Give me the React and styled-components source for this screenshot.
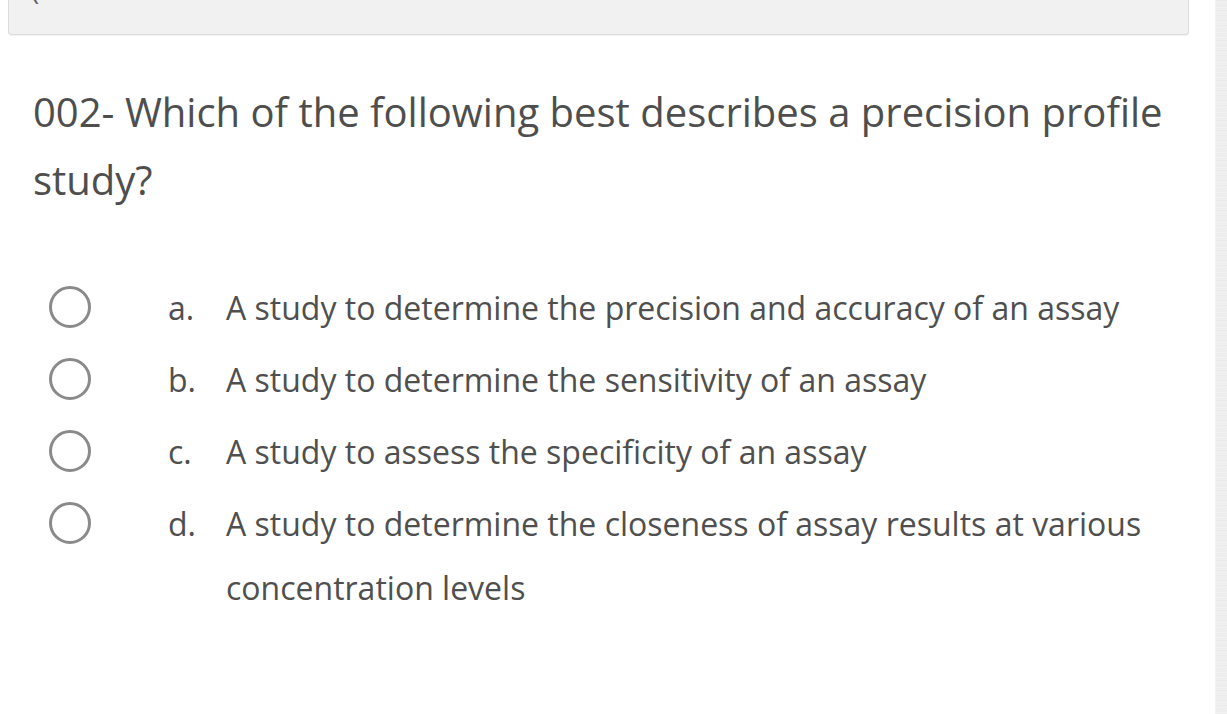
import React from 'react'
import styled, { createGlobalStyle } from 'styled-components'

const GlobalStyle = createGlobalStyle`
	html, body {
		margin: 0;
		padding: 0;
		background: #ffffff;
	}
	body {
		font-family: "Open Sans", "Noto Sans", sans-serif;
		color: #555555;
	}
`

const Page = styled.div`
	display: grid;
	grid-template-columns: 1fr 12px;
	width: 1227px;
	height: 714px;
	overflow: hidden;
`

const Main = styled.div`
	padding: 0 26px 0 8px;
`

const Scrollbar = styled.div`
	background: repeating-linear-gradient(0deg, #ececec 0px, #f3f3f3 2px, #e9e9e9 3px, #f1f1f1 5px);
	border-left: 1px solid #f4f4f4;
`

const InfoBox = styled.div`
	height: 34px;
	background: #f1f1f1;
	border: 1px solid #dcdcdc;
	border-top: none;
	border-radius: 0 0 4px 4px;
	box-shadow: 0 1px 1px rgba(0, 0, 0, 0.06);
	overflow: hidden;
`

const CutText = styled.div`
	margin: -26px 0 0 22px;
	font-size: 28px;
	line-height: 30px;
	color: #666666;
`

const Question = styled.h2`
	margin: 43px 0 0 25px;
	font-size: 40px;
	font-weight: 400;
	line-height: 68px;
	color: #4e4e4e;
`

const Options = styled.div`
	display: flex;
	flex-direction: column;
	gap: 8px;
	margin-top: 62px;
	padding-left: 41px;
`

const Option = styled.label`
	display: grid;
	grid-template-columns: 42px 135px 1fr;
	align-items: start;
	font-size: 32px;
	line-height: 64px;
	color: #4f4f4f;
	cursor: pointer;
`

const Radio = styled.span`
	box-sizing: border-box;
	width: 42px;
	height: 42px;
	margin-top: 10px;
	border: 3px solid #8a8a8a;
	border-radius: 50%;
	background: #ffffff;
`

const Letter = styled.span`
	margin-left: 77px;
`

const Text = styled.span``

const OPTIONS = [
	{ letter: 'a.', text: 'A study to determine the precision and accuracy of an assay' },
	{ letter: 'b.', text: 'A study to determine the sensitivity of an assay' },
	{ letter: 'c.', text: 'A study to assess the specificity of an assay' },
	{ letter: 'd.', text: 'A study to determine the closeness of assay results at various concentration levels' },
]

function App() {
	return (
		<>
			<GlobalStyle />
			<Page>
				<Main>
					<InfoBox>
						<CutText>(</CutText>
					</InfoBox>
					<Question>002- Which of the following best describes a precision profile study?</Question>
					<Options>
						{OPTIONS.map(o => (
							<Option key={o.letter}>
								<Radio />
								<Letter>{o.letter}</Letter>
								<Text>{o.text}</Text>
							</Option>
						))}
					</Options>
				</Main>
				<Scrollbar />
			</Page>
		</>
	)
}

export default App
